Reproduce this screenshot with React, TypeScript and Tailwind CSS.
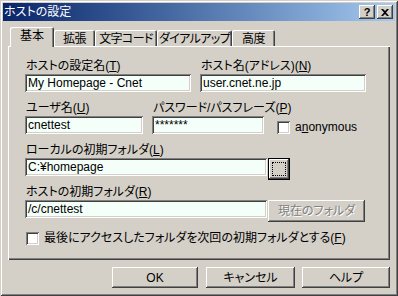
const raised =
  "shadow-[inset_-1px_-1px_#404040,inset_1px_1px_#ffffff,inset_-2px_-2px_#808080]";
const sunken =
  "shadow-[inset_1px_1px_#808080,inset_-1px_-1px_#ffffff,inset_2px_2px_#404040,inset_-2px_-2px_#d4d0c8]";

function Label({ text, k, className = "" }: { text: string; k?: string; className?: string }) {
  return (
    <div className={`h-[13px] leading-[13px] whitespace-nowrap pl-[1px] ${className}`}>
      {text}
      {k && (
        <>
          (<u>{k}</u>)
        </>
      )}
    </div>
  );
}

function Field({ value, className = "" }: { value: string; className?: string }) {
  return (
    <div
      className={`h-[18px] bg-[#f5fff9] pl-[3px] leading-[18px] whitespace-nowrap overflow-hidden ${sunken} ${className}`}
    >
      {value}
    </div>
  );
}

function CheckBox() {
  return <div className={`w-[13px] h-[13px] shrink-0 bg-white ${sunken}`} />;
}

function Tab({ label, w, active }: { label: string; w: number; active?: boolean }) {
  return (
    <div
      style={{ width: w }}
      className={
        active
          ? "relative z-10 -mb-px h-[20px] rounded-t-[2px] bg-[#d4d0c8] pt-[2px] text-center leading-[14px] whitespace-nowrap shadow-[inset_1px_1px_#ffffff,inset_-1px_0_#404040,inset_-2px_0_#808080]"
          : "h-[16px] rounded-t-[2px] bg-[#d4d0c8] pt-[2px] text-center leading-[14px] whitespace-nowrap tracking-[-0.6px] shadow-[inset_1px_1px_#ffffff,inset_-1px_0_#404040,inset_-2px_0_#808080]"
      }
    >
      {label}
    </div>
  );
}

function PushButton({ label, w }: { label: string; w: string }) {
  return (
    <div className={`${w} h-[21px] flex items-center justify-center bg-[#d4d0c8] ${raised}`}>
      {label}
    </div>
  );
}

export default function App() {
  return (
    <div className="w-[398px] h-[296px] overflow-hidden bg-[#d4d0c8] p-[3px] text-[12px] text-black font-['Liberation_Sans','Noto_Sans_CJK_JP',sans-serif] [font-feature-settings:'palt'] shadow-[inset_1px_1px_#d4d0c8,inset_-1px_-1px_#404040,inset_2px_2px_#ffffff,inset_-2px_-2px_#808080]">
      {/* title bar */}
      <div className="h-[18px] flex items-center bg-linear-to-r from-[#0a246a] to-[#a6caf0] pl-[1px] pr-[2px]">
        <span className="text-white leading-[18px]">ホストの設定</span>
        <div className="ml-auto flex gap-[2px]">
          <div
            className={`w-[16px] h-[14px] flex items-center justify-center bg-[#d4d0c8] font-bold text-[11px] leading-none ${raised}`}
          >
            ?
          </div>
          <div className={`w-[16px] h-[14px] flex items-center justify-center bg-[#d4d0c8] ${raised}`}>
            <svg width="8" height="7" viewBox="0 0 8 7">
              <path d="M0 0h2l2 2 2-2h2L5 3.5 8 7H6L4 5 2 7H0l3-3.5z" fill="#000" />
            </svg>
          </div>
        </div>
      </div>

      {/* tabs */}
      <div className="mt-[6px] h-[19px] flex items-end pl-[7px]">
        <Tab label="基本" w={44} active />
        <Tab label="拡張" w={41} />
        <Tab label="文字コード" w={62} />
        <Tab label="ダイアルアップ" w={75} />
        <Tab label="高度" w={43} />
      </div>

      {/* page */}
      <div className="ml-[5px] w-[382px] h-[214px] pt-[14px] pl-[17px] shadow-[inset_1px_1px_#ffffff,inset_-1px_-1px_#404040,inset_-2px_-2px_#808080]">
        <div className="h-[42px]">
          <div className="flex">
            <Label text="ホストの設定名" k="T" className="w-[175px]" />
            <Label text="ホスト名(アドレス)" k="N" />
          </div>
          <div className="flex mt-[1px]">
            <Field value="My Homepage - Cnet" className="w-[166px]" />
            <Field value="user.cnet.ne.jp" className="w-[166px] ml-[9px]" />
          </div>
        </div>

        <div className="h-[42px]">
          <div className="flex">
            <Label text="ユーザ名" k="U" className="w-[127px]" />
            <Label text="パスワード/パスフレーズ" k="P" />
          </div>
          <div className="flex items-center mt-[1px]">
            <Field value="cnettest" className="w-[118px]" />
            <Field value="*******" className="w-[112px] ml-[9px]" />
            <div className="ml-[13px] mt-[4px] flex items-center">
              <CheckBox />
              <span className="ml-[5px] leading-[13px]">
                a<u>n</u>onymous
              </span>
            </div>
          </div>
        </div>

        <div className="h-[42px]">
          <Label text="ローカルの初期フォルダ" k="L" />
          <div className="flex items-start mt-[1px]">
            <Field value="C:¥homepage" className="w-[242px]" />
            <div className="ml-[1px] w-[22px] h-[22px] border border-black bg-[#d4d0c8]">
              <div className={`w-[20px] h-[20px] flex items-center justify-center ${raised}`}>
                <div className="w-[14px] h-[14px] border border-dotted border-black" />
              </div>
            </div>
          </div>
        </div>

        <div className="h-[42px]">
          <Label text="ホストの初期フォルダ" k="R" />
          <div className="flex items-start mt-[1px]">
            <Field value="/c/cnettest" className="w-[242px]" />
            <div
              className={`ml-[1px] w-[97px] h-[22px] flex items-center justify-center bg-[#d4d0c8] text-[#808080] [text-shadow:1px_1px_#ffffff] ${raised}`}
            >
              現在のフォルダ
            </div>
          </div>
        </div>

        <div className="mt-[4px] flex items-center pl-[1px]">
          <CheckBox />
          <span className="ml-[5px] leading-[13px] whitespace-nowrap">
            最後にアクセスしたフォルダを次回の初期フォルダとする(<u>F</u>)
          </span>
        </div>
      </div>

      {/* buttons */}
      <div className="mt-[7px] flex pl-[109px]">
        <PushButton label="OK" w="w-[86px]" />
        <div className="ml-[8px]">
          <PushButton label="キャンセル" w="w-[89px]" />
        </div>
        <div className="ml-[7px]">
          <PushButton label="ヘルプ" w="w-[88px]" />
        </div>
      </div>
    </div>
  );
}
